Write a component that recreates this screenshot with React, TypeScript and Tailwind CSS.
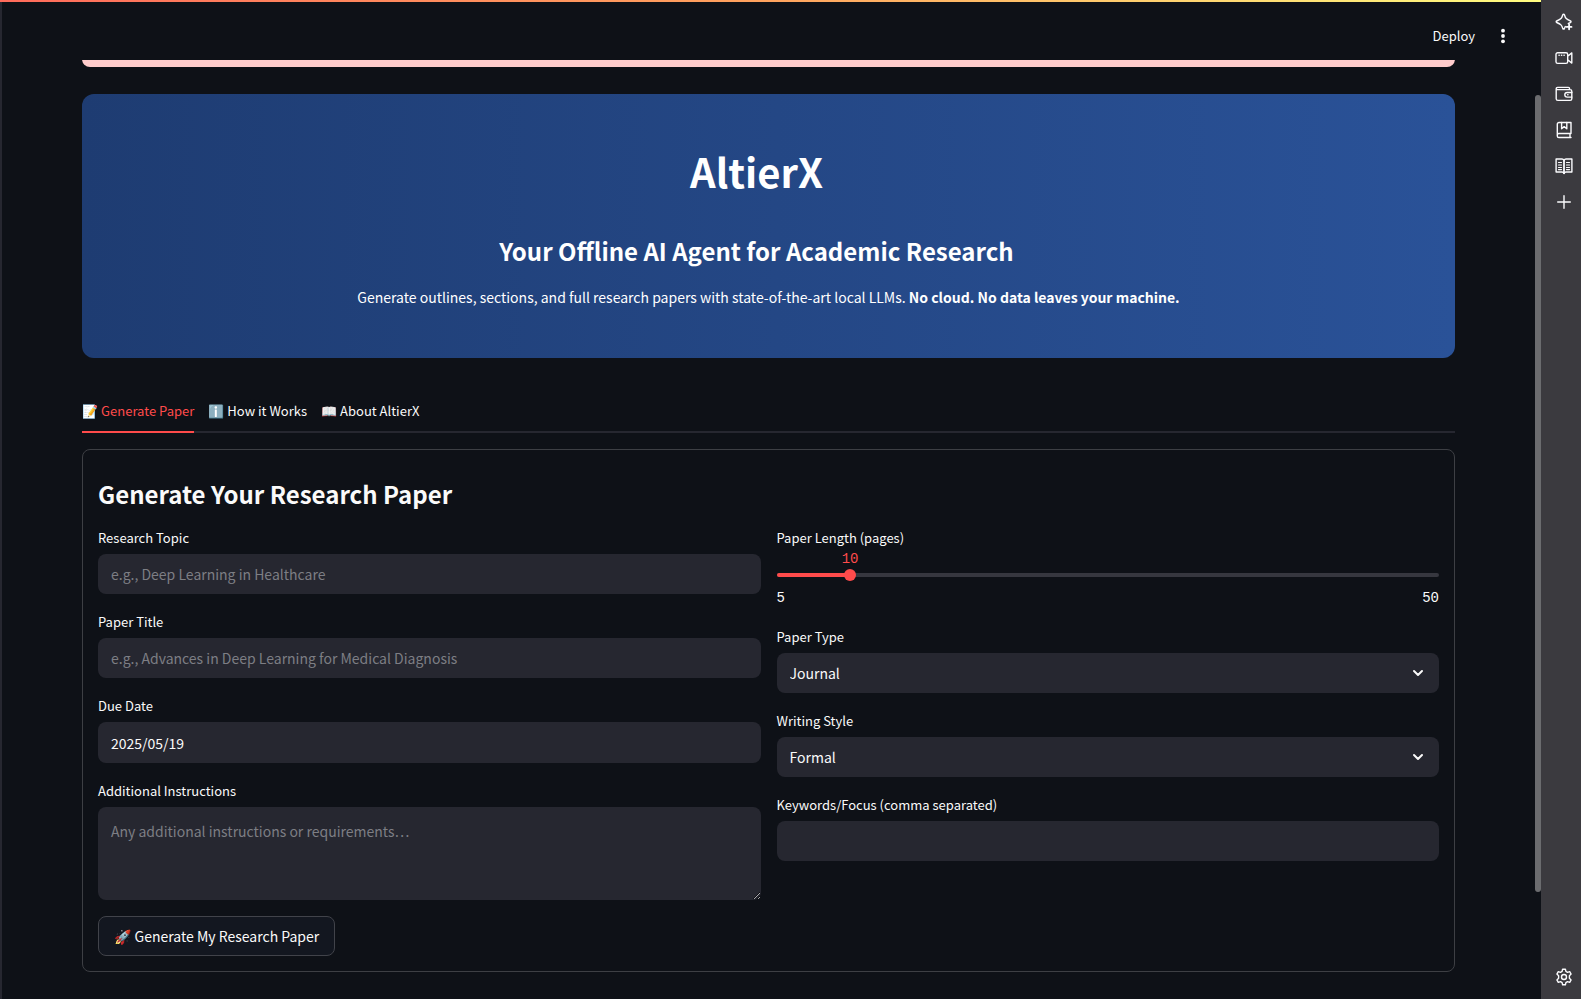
import { useState, type ReactNode } from "react";
import { ChevronDown } from "lucide-react";

const control =
  "block w-full rounded-lg bg-[#262730] px-[13px] text-[14px] text-[#fafafa] outline-none placeholder:text-[#7d7e84]";

function Field({ id, label, children }: { id: string; label: string; children: ReactNode }) {
  return (
    <div>
      <label htmlFor={id} className="mb-1 block text-[13px] leading-6">
        {label}
      </label>
      {children}
    </div>
  );
}

function SelectField({ id, label, options }: { id: string; label: string; options: string[] }) {
  return (
    <Field id={id} label={label}>
      <div className="relative">
        <select id={id} className={`${control} h-10 appearance-none`}>
          {options.map((o) => (
            <option key={o}>{o}</option>
          ))}
        </select>
        <ChevronDown
          size={16}
          strokeWidth={3}
          className="pointer-events-none absolute top-3 right-[13px]"
        />
      </div>
    </Field>
  );
}

function LengthSlider() {
  const min = 5;
  const max = 50;
  const [value, setValue] = useState(10);
  const percent = ((value - min) / (max - min)) * 100;
  return (
    <div>
      <label htmlFor="length" className="block text-[13px] leading-6">
        Paper Length (pages)
      </label>
      <div className="relative h-[19px] font-['Liberation_Mono',monospace] text-[14px] leading-[18px] text-[#ff4b4b]">
        <output htmlFor="length" className="absolute -translate-x-1/2" style={{ left: `${percent}%` }}>
          {value}
        </output>
      </div>
      <div className="relative flex h-3 items-center">
        <div className="h-1 w-full overflow-hidden rounded-full bg-[#36373f]">
          <div className="h-full bg-[#ff4b4b]" style={{ width: `${percent}%` }} />
        </div>
        <input
          id="length"
          type="range"
          min={min}
          max={max}
          value={value}
          onChange={(e) => setValue(Number(e.target.value))}
          className="absolute inset-y-0 -left-1.5 h-3 w-[calc(100%+12px)] appearance-none bg-transparent [&::-webkit-slider-thumb]:size-3 [&::-webkit-slider-thumb]:appearance-none [&::-webkit-slider-thumb]:rounded-full [&::-webkit-slider-thumb]:bg-[#ff4b4b]"
        />
      </div>
      <div className="flex justify-between pt-2 pb-0.5 font-['Liberation_Mono',monospace] text-[14px] leading-[18px]">
        <span>{min}</span>
        <span>{max}</span>
      </div>
    </div>
  );
}

function RailButton({ label, children }: { label: string; children: ReactNode }) {
  return (
    <button aria-label={label} className="flex h-9 w-full items-center justify-center">
      <svg
        viewBox="0 0 18 18"
        className="ml-1.5 size-[18px]"
        fill="none"
        stroke="currentColor"
        strokeWidth="1.4"
        strokeLinecap="round"
        strokeLinejoin="round"
      >
        {children}
      </svg>
    </button>
  );
}

function Rail() {
  return (
    <aside className="flex w-10 shrink-0 flex-col justify-between bg-[#3b3a3f] pt-1 pb-1 text-[#fbfbfe]">
      <nav aria-label="Browser sidebar">
        <RailButton label="AI chatbot">
          <path d="M10.300 13.600c-.3.700-.6 1.100-.9 2-.3.600-1.300.6-1.600 0C6.700 12 6 11.300 1.700 9.500c-.7-.3-.7-1.200 0-1.500C6 6.200 6.700 5.400 7.800 1.700c.3-.7 1.300-.7 1.600 0C10.500 5.400 11.200 6.200 15.500 8c.7.300.7 1.200 0 1.500-.9.400-1.600.700-2.200 1.100" />
          <path d="M14.100 11.500v4.800M11.700 13.900h4.800" strokeWidth="1.8" />
        </RailButton>
        <RailButton label="Recorder">
          <path d="M2.700 3.700H11a1.700 1.700 0 0 1 1.700 1.700v7.300a1.700 1.700 0 0 1-1.700 1.700H2.700A1.700 1.700 0 0 1 1 12.700V5.400a1.700 1.700 0 0 1 1.700-1.700zM12.700 7.200 16.800 3.900v10.200l-4.100-3.300" />
          <path d="M4 6.300h.2M6.500 6.300h.2M9 6.300h.2" strokeWidth="1.500" />
        </RailButton>
        <RailButton label="Wallet">
          <path d="M1.200 3.600v10.100c0 1 .7 1.700 1.700 1.700h12.200c1 0 1.700-.7 1.700-1.700V6.200c0-1-.7-1.600-1.700-1.600H2.500c-.8 0-1.300-.4-1.300-1s.5-1.200 1.300-1.200h10.800c.8 0 1.300.5 1.300 1.300v.9" />
          <path d="M16.800 7.500h-4.600c-1.300 0-2.400 1-2.400 2.300s1.100 2.300 2.400 2.300h4.600M12.700 9.800h.3" />
        </RailButton>
        <RailButton label="Bookmarks">
          <path d="M16 12.500V1.500H4A1.700 1.700 0 0 0 2.300 3.200v11.700c0 .9.700 1.600 1.600 1.600H16M16 12.500H3.900a1.700 1.700 0 0 0-1.600 1.900M15 12.500v4" />
          <path d="M6.600 1.500v6.200l2.600-2.100 2.600 2.100V1.500" />
        </RailButton>
        <RailButton label="Reading list">
          <path d="M9 3.200C8.600 2.400 7.900 2 7 2H1.100v13h6c.9 0 1.500.6 1.900 1.500.4-.9 1-1.500 1.900-1.500h6V2H11c-.9 0-1.600.4-2 1.200z" />
          <path d="M9 3.200v13" strokeWidth="1.8" />
          <path
            d="M3.500 5.500h3M3.500 8h3M3.500 10.500h3M3.500 12.600h3M11.500 5.500h3M11.500 8h3M11.500 10.500h3M11.500 12.600h3"
            strokeWidth="1.200"
          />
        </RailButton>
        <RailButton label="Add panel">
          <path d="M9 2.700v12.600M2.700 9h12.600" />
        </RailButton>
      </nav>
      <RailButton label="Settings">
        <path d="M7.600 1.200h2.800l.5 2.200 1.600.9 2.200-.7 1.400 2.500-1.700 1.600v2.600l1.700 1.600-1.400 2.500-2.200-.7-1.600.9-.5 2.200H7.600l-.5-2.200-1.600-.9-2.200.7-1.400-2.500 1.700-1.600V7.700L1.900 6.100l1.400-2.500 2.200.7 1.600-.9z" />
        <circle cx="9" cy="9" r="2.500" />
      </RailButton>
    </aside>
  );
}

const tabs = ["📝 Generate Paper", "ℹ️ How it Works", "📖 About AltierX"];

export default function App() {
  const [active, setActive] = useState(0);
  return (
    <div className="flex min-h-screen bg-[#0e1117] font-['Noto_Sans_CJK_SC','Noto_Color_Emoji',sans-serif] text-[#fafafa] scheme-dark">
      <div className="flex min-w-0 flex-1 flex-col">
        <div className="h-0.5 bg-linear-to-r from-[#ff6b5b] via-[#ffa35e] to-[#fffd80]" />
        <div className="flex flex-1 border-l-2 border-[#262730]">
          <div className="min-w-0 flex-1">
            <header className="flex h-[58px] items-center justify-end gap-[18px] pt-2.5 pr-[22px]">
              <button className="text-[13px] leading-6">Deploy</button>
              <button aria-label="Main menu" className="flex h-6 w-5 items-center justify-center">
                <svg viewBox="0 0 20 20" className="size-5" fill="currentColor">
                  <circle cx="10" cy="4.700" r="1.900" />
                  <circle cx="10" cy="10" r="1.900" />
                  <circle cx="10" cy="15.300" r="1.900" />
                </svg>
              </button>
            </header>

            <main className="px-20">
              <div className="flex h-[7px] flex-col justify-end overflow-hidden">
                <div className="h-6 shrink-0 rounded-lg bg-[#ffcccc]" />
              </div>

              <section className="mt-[27px] rounded-xl bg-linear-to-r from-[#1e3c72] to-[#2a5298] pt-[51px] pb-[49px] text-center text-white">
                <h1 className="pr-6 text-[40px] leading-[52px] font-bold">AltierX</h1>
                <h2 className="mt-9 pr-6 text-[24px] leading-9 font-bold">
                  Your Offline AI Agent for Academic Research
                </h2>
                <p className="mt-4 text-[14px] leading-6">
                  Generate outlines, sections, and full research papers with state-of-the-art local LLMs.{" "}
                  <strong className="font-bold">No cloud. No data leaves your machine.</strong>
                </p>
              </section>

              <div role="tablist" className="mt-8 flex gap-3.5 border-b-2 border-[#262730]">
                {tabs.map((tab, i) => (
                  <button
                    key={tab}
                    role="tab"
                    aria-selected={i === active}
                    onClick={() => setActive(i)}
                    className={
                      i === active
                        ? "-mb-0.5 h-[43px] border-b-2 border-[#ff4b4b] text-[13px] text-[#ff4b4b]"
                        : "-mb-0.5 h-[43px] border-b-2 border-transparent text-[13px]"
                    }
                  >
                    {tab}
                  </button>
                ))}
              </div>

              <form
                onSubmit={(e) => e.preventDefault()}
                className="mt-4 rounded-lg border border-[#3d3f44] p-[15px]"
              >
                <h2 className="mb-4 pt-3 text-[24px] leading-[33px] font-bold">
                  Generate Your Research Paper
                </h2>
                <div className="grid grid-cols-2 gap-4">
                  <div className="flex flex-col gap-4">
                    <Field id="topic" label="Research Topic">
                      <input id="topic" className={`${control} h-10`} placeholder="e.g., Deep Learning in Healthcare" />
                    </Field>
                    <Field id="title" label="Paper Title">
                      <input
                        id="title"
                        className={`${control} h-10`}
                        placeholder="e.g., Advances in Deep Learning for Medical Diagnosis"
                      />
                    </Field>
                    <Field id="due" label="Due Date">
                      <input id="due" className={`${control} h-[41px]`} defaultValue="2025/05/19" />
                    </Field>
                    <Field id="instructions" label="Additional Instructions">
                      <textarea
                        id="instructions"
                        className={`${control} h-[93px] resize-y py-3 leading-6`}
                        placeholder="Any additional instructions or requirements…"
                      />
                    </Field>
                  </div>
                  <div className="flex flex-col gap-4">
                    <LengthSlider />
                    <SelectField id="type" label="Paper Type" options={["Journal", "Conference", "Thesis"]} />
                    <SelectField id="style" label="Writing Style" options={["Formal", "Technical", "Casual"]} />
                    <Field id="keywords" label="Keywords/Focus (comma separated)">
                      <input id="keywords" className={`${control} h-10`} />
                    </Field>
                  </div>
                </div>
                <button
                  type="submit"
                  className="mt-4 h-10 rounded-lg border border-[#41434a] bg-[#131720] px-[15px] text-[14px] leading-6"
                >
                  🚀 Generate My Research Paper
                </button>
              </form>
            </main>
          </div>
          <div aria-hidden="true" className="w-1.5 pt-[93px]">
            <div className="h-[797px] rounded-full bg-[#6b6c6f]" />
          </div>
        </div>
      </div>
      <Rail />
    </div>
  );
}
